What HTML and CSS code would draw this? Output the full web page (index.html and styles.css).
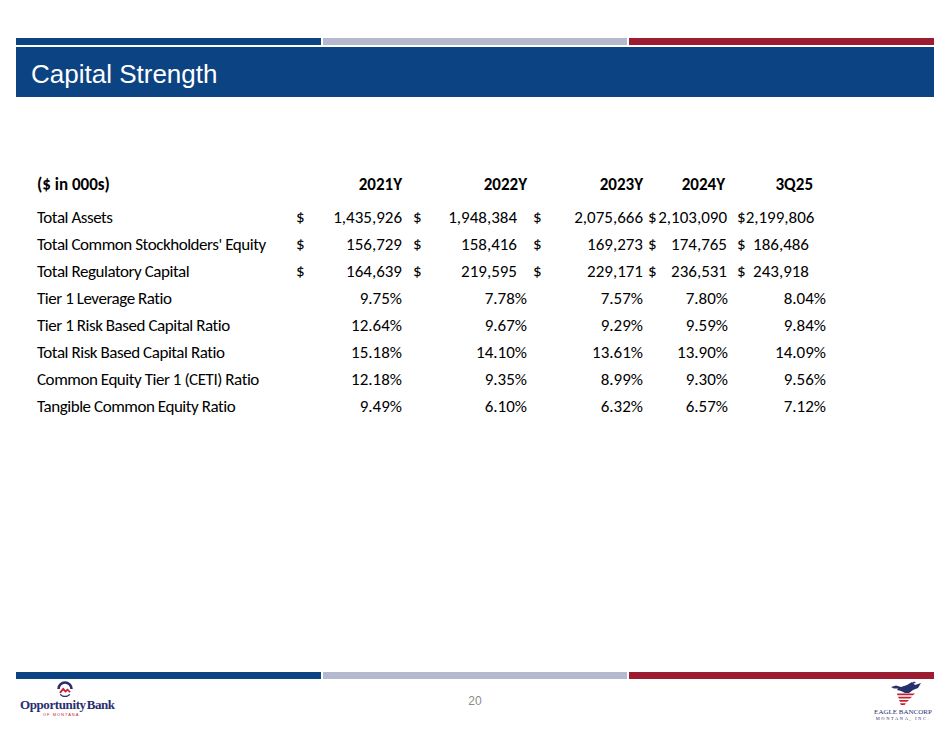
FILE: index.html
```
<!DOCTYPE html>
<html>
<head>
<meta charset="utf-8">
<link rel="stylesheet" href="styles.css">
</head>
<body>
<div class="page">
  <header class="hdr">
    <div class="strip">
      <div class="seg blue"></div>
      <div class="seg gray"></div>
      <div class="seg red"></div>
    </div>
    <div class="titlebar"><h1 class="title">Capital Strength</h1></div>
  </header>

  <section class="tbl">
    <div class="row head">
      <div class="lbl">($ in 000s)</div>
      <div class="c">2021Y</div>
      <div class="c">2022Y</div>
      <div class="c">2023Y</div>
      <div class="c">2024Y</div>
      <div class="c">3Q25</div>
    </div>
    <div class="row money">
      <div class="lbl">Total Assets</div>
      <div class="c"><span>$</span><span>1,435,926</span></div>
      <div class="c"><span>$</span><span>1,948,384</span></div>
      <div class="c"><span>$</span><span>2,075,666</span></div>
      <div class="c"><span>$</span><span>2,103,090</span></div>
      <div class="c"><span>$</span><span>2,199,806</span></div>
    </div>
    <div class="row money">
      <div class="lbl">Total Common Stockholders' Equity</div>
      <div class="c"><span>$</span><span>156,729</span></div>
      <div class="c"><span>$</span><span>158,416</span></div>
      <div class="c"><span>$</span><span>169,273</span></div>
      <div class="c"><span>$</span><span>174,765</span></div>
      <div class="c"><span>$</span><span>186,486</span></div>
    </div>
    <div class="row money">
      <div class="lbl">Total Regulatory Capital</div>
      <div class="c"><span>$</span><span>164,639</span></div>
      <div class="c"><span>$</span><span>219,595</span></div>
      <div class="c"><span>$</span><span>229,171</span></div>
      <div class="c"><span>$</span><span>236,531</span></div>
      <div class="c"><span>$</span><span>243,918</span></div>
    </div>
    <div class="row pct">
      <div class="lbl">Tier 1 Leverage Ratio</div>
      <div class="c">9.75%</div><div class="c">7.78%</div><div class="c">7.57%</div><div class="c">7.80%</div><div class="c">8.04%</div>
    </div>
    <div class="row pct">
      <div class="lbl">Tier 1 Risk Based Capital Ratio</div>
      <div class="c">12.64%</div><div class="c">9.67%</div><div class="c">9.29%</div><div class="c">9.59%</div><div class="c">9.84%</div>
    </div>
    <div class="row pct">
      <div class="lbl">Total Risk Based Capital Ratio</div>
      <div class="c">15.18%</div><div class="c">14.10%</div><div class="c">13.61%</div><div class="c">13.90%</div><div class="c">14.09%</div>
    </div>
    <div class="row pct">
      <div class="lbl">Common Equity Tier 1 (CETI) Ratio</div>
      <div class="c">12.18%</div><div class="c">9.35%</div><div class="c">8.99%</div><div class="c">9.30%</div><div class="c">9.56%</div>
    </div>
    <div class="row pct">
      <div class="lbl">Tangible Common Equity Ratio</div>
      <div class="c">9.49%</div><div class="c">6.10%</div><div class="c">6.32%</div><div class="c">6.57%</div><div class="c">7.12%</div>
    </div>
  </section>

  <footer class="ftr">
    <div class="strip">
      <div class="seg blue"></div>
      <div class="seg gray"></div>
      <div class="seg red"></div>
    </div>
    <div class="ftr-row">
      <div class="obank">
        <svg class="obank-mark" viewBox="0 0 16 16" width="16" height="16">
          <path d="M1.5 8 A6.5 6.5 0 0 1 14.5 8" fill="none" stroke="#2b2d6e" stroke-width="2.6"/>
          <path d="M2.2 11.2 L6.2 6.6 L8.6 9.2 L10.6 7.4 L13.8 10.8 L12.4 11.8 L10.6 9.8 L8.6 11.8 L6.2 9.4 L3.6 12.4 Z" fill="#c8202f"/>
          <path d="M3.2 13.4 A6.5 6.5 0 0 0 12.8 13.4" fill="none" stroke="#2b2d6e" stroke-width="1.4"/>
        </svg>
        <div class="obank-name">Opportunity<span class="b">Bank</span></div>
        <div class="obank-sub">OF MONTANA</div>
      </div>
      <div class="pagenum">20</div>
      <div class="eagle">
        <svg class="eagle-mark" viewBox="0 0 40 26" width="40" height="26">
          <path d="M6 6 L11 4.5 L16 6 L22 4 L27 1 L30 4 L36 2 L33 7 L28 9 L24 12 L20 12 L16 10 L12 9 L13 7.5 L9 7.5 Z" fill="#27306b"/>
          <path d="M26 3 L29 0.5 L31 2 Z" fill="#27306b"/>
          <path d="M12 12.5 L30 12.5 L28 14.3 L12.5 14.3 Z" fill="#c8202f"/>
          <path d="M13 15.8 L27 15.8 L25 17.6 L14 17.6 Z" fill="#c8202f"/>
          <path d="M14 19 L24 19 L22 20.8 L15 20.8 Z" fill="#c8202f"/>
          <path d="M15 22.2 L21 22.2 L19.5 24 L16 24 Z" fill="#c8202f"/>
        </svg>
        <div class="eagle-name">EAGLE BANCORP</div>
        <div class="eagle-sub">MONTANA, INC.</div>
      </div>
    </div>
  </footer>
</div>
</body>
</html>
```
FILE: styles.css
```
* { box-sizing: border-box; }
html, body { margin: 0; padding: 0; background: #fff; }
.page {
  width: 950px;
  height: 734px;
  display: flex;
  flex-direction: column;
  overflow: hidden;
}
.hdr { margin: 38px 16px 0 16px; }
.strip { display: flex; gap: 2px; height: 7px; }
.seg { flex: 1; }
.seg.blue { background: #0c4382; }
.seg.gray { background: #b5b9cd; }
.seg.red { background: #9c1c31; }
.titlebar {
  margin-top: 2px;
  height: 50px;
  background: #0c4382;
  display: flex;
  align-items: center;
  padding-left: 15px;
}
.title {
  margin: 0;
  color: #fff;
  font-family: "Liberation Sans", Arial, sans-serif;
  font-weight: normal;
  font-size: 26px;
  line-height: 1;
  padding-top: 3px;
}

.tbl {
  margin: 74px 0 0 37px;
  font-family: Carlito, Lato, "Open Sans", sans-serif;
  font-size: 17px;
  color: #000;
  font-variant-ligatures: none;
}
.row {
  display: grid;
  grid-template-columns: 259px 117px 120px 115px 89px 89px;
  height: 27px;
  align-items: center;
}
.lbl { letter-spacing: -0.45px; white-space: nowrap; }
.row.head { font-weight: bold; margin-bottom: 6px; }
.row.head .lbl { letter-spacing: 0; }
.c { text-align: right; white-space: nowrap; }
.money .c { display: flex; justify-content: space-between; }
.row .c:nth-child(2) { padding-right: 11px; }
.row .c:nth-child(3) { padding-right: 6px; }
.row .c:nth-child(4) { padding-right: 5px; }
.row .c:nth-child(5) { padding-right: 9px; }
.row .c:nth-child(6) { padding-right: 0; }
.money .c:nth-child(3) { padding-right: 16px; }
.money .c:nth-child(5) { padding-right: 10px; }
.money .c:nth-child(6) { padding-right: 17px; }
.head .c:nth-child(5) { padding-right: 12px; }
.head .c:nth-child(6) { padding-right: 13px; }

.ftr { margin-top: auto; padding: 0 16px; height: 62px; }
.ftr .strip { height: 7px; }
.ftr-row {
  display: grid;
  grid-template-columns: 1fr auto 1fr;
  align-items: start;
  height: 55px;
}
.obank {
  justify-self: start;
  width: 98px;
  margin-left: 4px;
  display: flex;
  flex-direction: column;
  align-items: flex-start;
  padding-top: 2px;
}
.obank-mark { display: block; margin-left: 37px; }
.obank-name {
  font-family: "Liberation Serif", "DejaVu Serif", serif;
  font-weight: bold;
  font-size: 13px;
  color: #2b2d6e;
  line-height: 14px;
  letter-spacing: -0.4px;
  margin-top: 1px;
}
.obank-name .b { margin-left: 1px; }
.obank-sub {
  font-family: "Liberation Sans", Arial, sans-serif;
  font-size: 4px;
  letter-spacing: 1px;
  color: #c8202f;
  margin-left: 23px;
  line-height: 5px;
}
.pagenum {
  font-family: "Liberation Sans", Arial, sans-serif;
  font-size: 12px;
  color: #8a8a8a;
  padding-top: 15px;
}
.eagle {
  justify-self: end;
  width: 66px;
  margin-right: -2px;
  display: flex;
  flex-direction: column;
  align-items: center;
  padding-top: 2px;
}
.eagle-mark { display: block; margin-left: 4px; }
.eagle-name {
  font-family: "Liberation Serif", "DejaVu Serif", serif;
  font-size: 7px;
  color: #27306b;
  line-height: 8px;
  margin-top: 1px;
}
.eagle-sub {
  font-family: "Liberation Serif", "DejaVu Serif", serif;
  font-size: 4.5px;
  letter-spacing: 1.6px;
  color: #27306b;
  line-height: 6px;
}
```
